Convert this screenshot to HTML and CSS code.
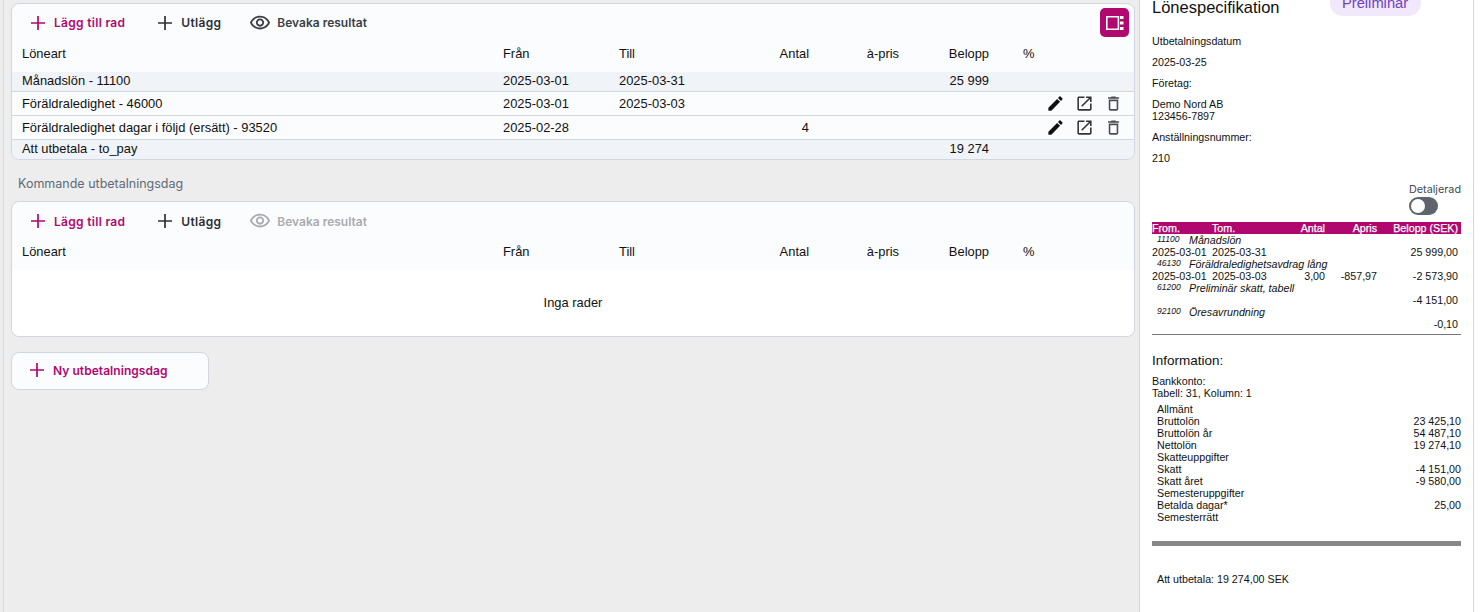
FILE: index.html
```html
<!DOCTYPE html>
<html lang="sv">
<head>
    <meta charset="UTF-8">
    <title>Lönespecifikation</title>
    <link rel="stylesheet" href="styles.css">
</head>
<body>
    <svg class="icon-defs" width="0" height="0">
        <symbol id="i-plus" viewBox="0 0 14 14"><path d="M7 0v14M0 7h14" fill="none" stroke="currentColor" stroke-width="1.7"/></symbol>
        <symbol id="i-eye" viewBox="0 0 24 24"><path d="M12 6c3.79 0 7.17 2.13 8.82 5.5C19.17 14.87 15.79 17 12 17s-7.17-2.13-8.82-5.5C4.83 8.13 8.21 6 12 6m0-2C7 4 2.73 7.11 1 11.5 2.73 15.89 7 19 12 19s9.27-3.11 11-7.5C21.27 7.11 17 4 12 4zm0 5c1.38 0 2.5 1.12 2.5 2.5S13.38 14 12 14s-2.5-1.12-2.5-2.5S10.62 9 12 9m0-2c-2.48 0-4.5 2.02-4.5 4.5S9.52 16 12 16s4.5-2.02 4.5-4.5S14.48 7 12 7z"/></symbol>
        <symbol id="i-edit" viewBox="0 0 24 24"><path d="M3 17.25V21h3.75L17.81 9.94l-3.75-3.75L3 17.25zM20.71 7.04c.39-.39.39-1.02 0-1.41l-2.34-2.34c-.39-.39-1.02-.39-1.41 0l-1.83 1.83 3.75 3.75 1.83-1.83z"/></symbol>
        <symbol id="i-open" viewBox="0 0 24 24"><path d="M19 19H5V5h7V3H5c-1.11 0-2 .9-2 2v14c0 1.1.89 2 2 2h14c1.1 0 2-.9 2-2v-7h-2v7zM14 3v2h3.59l-9.83 9.83 1.41 1.41L19 6.41V10h2V3h-7z"/></symbol>
        <symbol id="i-trash" viewBox="0 0 24 24"><path d="M6 19c0 1.1.9 2 2 2h8c1.1 0 2-.9 2-2V7H6v12zM8 9h8v10H8V9zm7.5-5l-1-1h-5l-1 1H5v2h14V4h-3.5z"/></symbol>
    </svg>

    <main class="main">
        <section class="card first-card">
            <div class="toolbar">
                <span class="tool tool-accent"><svg class="plus"><use href="#i-plus"/></svg>Lägg till rad</span>
                <span class="tool tool-dark"><svg class="plus"><use href="#i-plus"/></svg>Utlägg</span>
                <span class="tool tool-eye"><svg class="eye"><use href="#i-eye"/></svg>Bevaka resultat</span>
            </div>
            <button class="panel-btn" aria-label="Visa panel">
                <svg width="18" height="14" viewBox="0 0 18 14"><path d="M.8.8h11.6v12.4H.8z" fill="none" stroke="#fff" stroke-width="1.6"/><path d="M14 0h3.5v3H14zM14 5.5h3.5v3H14zM14 11h3.5v3H14z" fill="#fff"/></svg>
            </button>
            <div class="row head">
                <span>Löneart</span><span>Från</span><span>Till</span><span class="num">Antal</span><span class="num">à-pris</span><span class="num">Belopp</span><span class="pct">%</span>
            </div>
            <div class="row tinted short">
                <span>Månadslön - 11100</span><span>2025-03-01</span><span>2025-03-31</span><span></span><span></span><span class="num">25 999</span><span></span>
            </div>
            <div class="row">
                <span>Föräldraledighet - 46000</span><span>2025-03-01</span><span>2025-03-03</span><span></span><span></span><span></span><span></span>
                <span class="actions">
                    <svg class="act"><use href="#i-edit"/></svg>
                    <svg class="act act-open"><use href="#i-open"/></svg>
                    <svg class="act act-trash"><use href="#i-trash"/></svg>
                </span>
            </div>
            <div class="row">
                <span>Föräldraledighet dagar i följd (ersätt) - 93520</span><span>2025-02-28</span><span></span><span class="num">4</span><span></span><span></span><span></span>
                <span class="actions">
                    <svg class="act"><use href="#i-edit"/></svg>
                    <svg class="act act-open"><use href="#i-open"/></svg>
                    <svg class="act act-trash"><use href="#i-trash"/></svg>
                </span>
            </div>
            <div class="row tinted last">
                <span>Att utbetala - to_pay</span><span></span><span></span><span></span><span></span><span class="num">19 274</span><span></span>
            </div>
        </section>

        <h3 class="section-title">Kommande utbetalningsdag</h3>

        <section class="card">
            <div class="toolbar">
                <span class="tool tool-accent"><svg class="plus"><use href="#i-plus"/></svg>Lägg till rad</span>
                <span class="tool tool-dark"><svg class="plus"><use href="#i-plus"/></svg>Utlägg</span>
                <span class="tool tool-eye tool-off"><svg class="eye"><use href="#i-eye"/></svg>Bevaka resultat</span>
            </div>
            <div class="row head">
                <span>Löneart</span><span>Från</span><span>Till</span><span class="num">Antal</span><span class="num">à-pris</span><span class="num">Belopp</span><span class="pct">%</span>
            </div>
            <div class="empty">Inga rader</div>
        </section>

        <section class="card new-day">
            <span class="tool tool-new"><svg class="plus"><use href="#i-plus"/></svg>Ny utbetalningsdag</span>
        </section>
    </main>

    <aside class="side">
        <div class="side-top">
            <h2>Lönespecifikation</h2>
            <span class="pill">Preliminär</span>
        </div>
        <p>Utbetalningsdatum</p>
        <p>2025-03-25</p>
        <p>Företag:</p>
        <p>Demo Nord AB<br>123456-7897</p>
        <p>Anställningsnummer:</p>
        <p>210</p>

        <div class="detail">
            <span>Detaljerad</span>
            <span class="toggle"><i></i></span>
        </div>

        <div class="spec spec-head">
            <span>From.</span><span>Tom.</span><span class="num">Antal</span><span class="num">Apris</span><span class="num">Belopp (SEK)</span>
        </div>
        <div class="spec-name"><small>11100</small><em>Månadslön</em></div>
        <div class="spec"><span>2025-03-01</span><span>2025-03-31</span><span></span><span></span><span class="num">25 999,00</span></div>
        <div class="spec-name"><small>46130</small><em>Föräldraledighetsavdrag lång</em></div>
        <div class="spec"><span>2025-03-01</span><span>2025-03-03</span><span class="num">3,00</span><span class="num">-857,97</span><span class="num">-2 573,90</span></div>
        <div class="spec-name"><small>61200</small><em>Preliminär skatt, tabell</em></div>
        <div class="spec"><span></span><span></span><span></span><span></span><span class="num">-4 151,00</span></div>
        <div class="spec-name"><small>92100</small><em>Öresavrundning</em></div>
        <div class="spec spec-end"><span></span><span></span><span></span><span></span><span class="num">-0,10</span></div>

        <h2 class="info-title">Information:</h2>
        <div class="bank">Bankkonto:<br>Tabell: 31, Kolumn: 1</div>
        <div class="info">
            <div class="info-row"><span>Allmänt</span></div>
            <div class="info-row"><span>Bruttolön</span><span>23 425,10</span></div>
            <div class="info-row"><span>Bruttolön år</span><span>54 487,10</span></div>
            <div class="info-row"><span>Nettolön</span><span>19 274,10</span></div>
            <div class="info-row"><span>Skatteuppgifter</span></div>
            <div class="info-row"><span>Skatt</span><span>-4 151,00</span></div>
            <div class="info-row"><span>Skatt året</span><span>-9 580,00</span></div>
            <div class="info-row"><span>Semesteruppgifter</span></div>
            <div class="info-row"><span>Betalda dagar*</span><span>25,00</span></div>
            <div class="info-row"><span>Semesterrätt</span></div>
        </div>
        <div class="thick-bar"></div>
        <div class="to-pay">Att utbetala: 19 274,00 SEK</div>
    </aside>
</body>
</html>
```

FILE: styles.css
```css
html, body {
    margin: 0;
    height: 612px;
    overflow: hidden;
}
body {
    display: flex;
    font-family: "Liberation Sans", Arial, sans-serif;
    color: #111;
    background: #fff;
    padding-right: 6px;
}
.icon-defs {
    position: absolute;
}
.main {
    width: 1136px;
    margin-left: 3px;
    box-sizing: border-box;
    padding: 3px 4px 0 7px;
    background: #ededed;
    border-left: 1px solid #d8d8d8;
    box-shadow: -3px 0 0 #ededed;
}
.card {
    position: relative;
    background: #fbfcfe;
    border: 1px solid #d0d7e2;
    border-radius: 8px;
}
.toolbar {
    display: flex;
    align-items: center;
    height: 38px;
    padding: 0 0 1px 19px;
}
.first-card .toolbar {
    height: 37px;
    padding-bottom: 2px;
}
.tool {
    display: flex;
    align-items: center;
    font-family: Inter, sans-serif;
    font-size: 12px;
    font-weight: 600;
    white-space: nowrap;
}
.tool-accent {
    color: #b0086f;
    letter-spacing: .3px;
    margin-right: 33px;
}
.tool-dark {
    color: #2b3036;
    letter-spacing: .3px;
    margin-right: 29px;
}
.tool-eye {
    color: #3a3f45;
}
.tool-off {
    color: #a9abb0;
}
.tool-new {
    color: #b0086f;
    letter-spacing: .05px;
}
.plus {
    width: 14px;
    height: 14px;
    margin-right: 9px;
    color: inherit;
}
.eye {
    width: 22px;
    height: 22px;
    margin: 0 6px 0 -1px;
    fill: currentColor;
}
.panel-btn {
    position: absolute;
    top: 4px;
    right: 5px;
    width: 29px;
    height: 29px;
    padding: 0;
    border: none;
    border-radius: 5px;
    background: #b0086f;
    display: flex;
    align-items: center;
    justify-content: center;
}
.row {
    display: grid;
    grid-template-columns: 481px 116px 130px 60px 90px 90px 56px auto;
    align-items: center;
    box-sizing: border-box;
    height: 24px;
    padding: 0 0 1px 10px;
    font-size: 12.9px;
    border-bottom: 1px solid #d4d8de;
}
.head {
    height: 29px;
    border-bottom: none;
    align-items: start;
    padding-top: 3px;
}
.pct {
    padding-left: 34px;
}
.tinted {
    background: #f0f3f8;
    padding-bottom: 2px;
}
.short {
    height: 20px;
}
.last {
    height: 19px;
    border-bottom: none;
    border-radius: 0 0 8px 8px;
}
.num {
    text-align: right;
}
.actions {
    display: flex;
    gap: 10px;
    margin-left: .5px;
}
.act {
    width: 19px;
    height: 19px;
    fill: #111;
}
.act-open {
    fill: #333;
}
.act-trash {
    fill: #4a4d52;
}
.section-title {
    margin: 17px 0 10px 7px;
    font-family: Inter, sans-serif;
    font-size: 12.5px;
    font-weight: 400;
    line-height: 14px;
    color: #5f6b76;
}
.empty {
    box-sizing: border-box;
    background: #fff;
    border-radius: 0 0 8px 8px;
    height: 66px;
    padding-bottom: 1px;
    display: flex;
    align-items: center;
    justify-content: center;
    font-size: 12.9px;
}
.new-day {
    width: 178px;
    height: 34px;
    margin-top: 15px;
    display: flex;
    align-items: center;
    padding: 0 0 2px 18px;
}

.side {
    width: 335px;
    box-sizing: border-box;
    padding: 0 12px;
    border-left: 1px solid #d0d7e2;
    border-right: 1px solid #d0d7e2;
    font-size: 10.7px;
    line-height: 12px;
    background: #fff;
    color: #111;
}
.side-top {
    display: flex;
    justify-content: space-between;
    height: 35px;
}
.side h2 {
    margin: 0;
    font-size: 16.5px;
    font-weight: 400;
    line-height: 15px;
}
.pill {
    width: 67px;
    height: 26px;
    margin: -10px 40px 0 0;
    padding: 0 12px;
    border-radius: 13px;
    background: #f1e8fb;
    color: #6f42c1;
    font-size: 14.7px;
    line-height: 26px;
    white-space: nowrap;
}
.side p {
    margin: 0 0 9px;
}
.detail {
    display: flex;
    flex-direction: column;
    align-items: flex-start;
    width: 52px;
    margin: 20px 0 7px auto;
    font-family: Inter, sans-serif;
    font-size: 10.8px;
    color: #444a50;
}
.toggle {
    display: block;
    width: 29px;
    height: 18px;
    border-radius: 9px;
    background: #5f646c;
    margin-top: 1px;
}
.toggle i {
    display: block;
    width: 14px;
    height: 14px;
    margin: 2px;
    border-radius: 50%;
    background: #fff;
}
.spec {
    display: grid;
    grid-template-columns: 60px 60px 53px 52px 81px;
    height: 12px;
    padding-right: 3px;
    white-space: nowrap;
}
.spec-head {
    background: #b0086f;
    color: #fff;
    -webkit-text-stroke: .25px #fff;
}
.spec-name {
    display: flex;
    height: 12px;
    white-space: nowrap;
}
.spec-name small {
    width: 37px;
    padding-left: 5px;
    box-sizing: border-box;
    font-size: 8.5px;
    font-style: italic;
    line-height: 10px;
}
.spec-name em {
    font-style: italic;
}
.spec-end {
    padding-bottom: 4px;
    border-bottom: 1px solid #777;
}
.side h2.info-title {
    font-size: 13.5px;
    margin: 18px 0 7px;
}
.bank {
    margin-bottom: 4px;
}
.info {
    padding-left: 5px;
}
.info-row {
    display: flex;
    justify-content: space-between;
    height: 12px;
}
.thick-bar {
    height: 5px;
    margin-top: 18px;
    background: #888;
}
.to-pay {
    margin-top: 27px;
    padding-left: 5px;
}
```
